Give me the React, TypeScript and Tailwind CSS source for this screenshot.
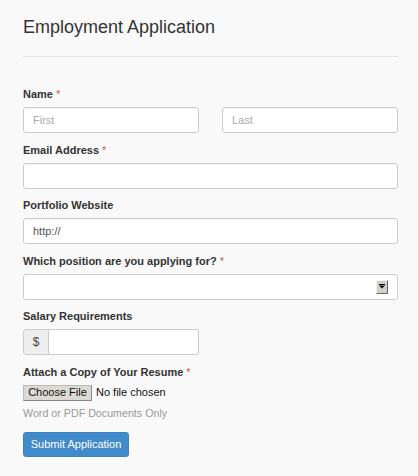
import React from "react";

const font = { fontFamily: '"Liberation Sans", Arial, sans-serif' };

function Label({ text, req }: { text: string; req?: boolean }) {
  return (
    <div className="text-[11px] leading-[15px] font-bold text-[#333] mb-[5px]">
      {text}
      {req && <span className="text-[#d9534f] font-normal ml-[3px]">*</span>}
    </div>
  );
}

const inputCls =
  "h-[26px] w-full rounded-[3px] border border-[#ccc] bg-white px-[9px] text-[11px] text-[#555] outline-none placeholder:text-[#aaa] shadow-[inset_0_1px_1px_rgba(0,0,0,0.04)]";

export default function App() {
  return (
    <div style={font} className="min-h-[476px] w-[418px] bg-[#f9f9f9] pl-[23px] pr-[20px] pt-[17px]">
      <h1 className="text-[18px] leading-[20px] font-normal text-[#333]">Employment Application</h1>
      <div className="mt-[19px] h-px bg-[#e5e5e5]" />
      <div className="mt-[30px]">
        <div className="mb-[9.5px]">
          <Label text="Name" req />
          <div className="flex gap-[23px]">
            <input className={inputCls} placeholder="First" />
            <input className={inputCls} placeholder="Last" />
          </div>
        </div>
        <div className="mb-[9.5px]">
          <Label text="Email Address" req />
          <input className={inputCls} />
        </div>
        <div className="mb-[9.5px]">
          <Label text="Portfolio Website" />
          <input className={inputCls} defaultValue="http://" />
        </div>
        <div className="mb-[9.5px]">
          <Label text="Which position are you applying for?" req />
          <div className="relative flex h-[26px] w-full items-center justify-end rounded-[3px] border border-[#ccc] bg-white pr-[9px]">
            <div className="flex h-[14px] w-[12px] items-center justify-center border border-t-[#f0f0f0] border-l-[#f0f0f0] border-r-[#666] border-b-[#666] bg-[#d4d0c8]">
              <svg width="6" height="5" viewBox="0 0 6 5">
                <rect x="0" y="0" width="6" height="1" fill="#000" />
                <path d="M0 1.5 L6 1.5 L3 4.5 Z" fill="#000" />
              </svg>
            </div>
          </div>
        </div>
        <div className="mb-[9.5px]">
          <Label text="Salary Requirements" />
          <div className="flex h-[26px] w-[176px]">
            <div className="flex w-[26px] items-center justify-center rounded-l-[3px] border border-[#ccc] bg-[#eee] text-[12px] text-[#444]">
              $
            </div>
            <input className="h-[26px] min-w-0 flex-1 rounded-r-[3px] border border-l-0 border-[#ccc] bg-white px-[9px] text-[11px] outline-none" />
          </div>
        </div>
        <div>
          <Label text="Attach a Copy of Your Resume" req />
          <div className="flex items-center h-[16px]">
            <div className="flex h-[16px] w-[69px] items-center justify-center border border-[#888] border-t-[#bbb] border-l-[#bbb] bg-[#dcdad5] text-[11px] text-[#111]">
              Choose File
            </div>
            <span className="ml-[4px] text-[11px] text-[#111]">No file chosen</span>
          </div>
          <div className="mt-[5px] text-[10.7px] leading-[15px] text-[#999]">Word or PDF Documents Only</div>
        </div>
        <button className="mt-[11px] h-[25px] w-[106px] rounded-[3px] border border-[#3b84c4] bg-[#428bca] text-[11px] text-white">
          Submit Application
        </button>
      </div>
    </div>
  );
}
